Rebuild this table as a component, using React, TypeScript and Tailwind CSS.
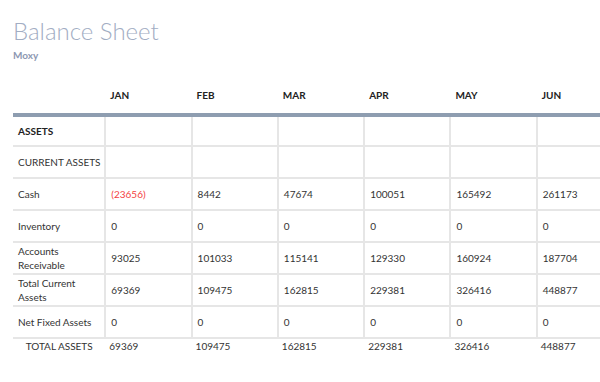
import React from 'react';

type Row = {
  label: string;
  values?: (number | string)[];
  bold?: boolean;
};

const months = ['JAN', 'FEB', 'MAR', 'APR', 'MAY', 'JUN'];

const rows: Row[] = [
  { label: 'ASSETS', bold: true },
  { label: 'CURRENT ASSETS' },
  { label: 'Cash', values: [-23656, 8442, 47674, 100051, 165492, 261173] },
  { label: 'Inventory', values: [0, 0, 0, 0, 0, 0] },
  { label: 'Accounts Receivable', values: [93025, 101033, 115141, 129330, 160924, 187704] },
  { label: 'Total Current Assets', values: [69369, 109475, 162815, 229381, 326416, 448877] },
  { label: 'Net Fixed Assets', values: [0, 0, 0, 0, 0, 0] },
];

const totals = [69369, 109475, 162815, 229381, 326416, 448877];

const fmt = (n: number | string) => {
  if (typeof n === 'number' && n < 0) {
    return <span className="text-[#f43f3f]">({Math.abs(n)})</span>;
  }
  return n;
};

export default function App() {
  return (
    <div
      className="w-[600px] h-[382px] overflow-hidden bg-white pl-[13px] pt-[16px]"
      style={{ fontFamily: 'Lato, "Open Sans", sans-serif' }}
    >
      <h1 className="text-[24px] font-light leading-[30px] text-[#a2adc3]">Balance Sheet</h1>
      <div className="text-[10px] font-bold leading-[12px] mt-[3px] text-[#8d98b2]">Moxy</div>

      <table className="mt-[20px] border-collapse table-fixed w-[610px] text-[10px] text-[#333]">
        <colgroup>
          <col className="w-[92px]" />
          {months.map((m) => (
            <col key={m} className="w-[86px]" />
          ))}
        </colgroup>
        <thead>
          <tr className="border-b-[4px] border-[#8e9db0]">
            <th className="h-[34px] pb-[3px]" />
            {months.map((m) => (
              <th key={m} className="text-left font-bold pl-[5px] pb-[3px] text-[#222]">
                {m}
              </th>
            ))}
          </tr>
        </thead>
        <tbody>
          {rows.map((r, idx) => (
            <tr key={r.label} className="border-b-2 border-[#e6e6e6]">
              <td
                className={`${idx === 0 ? 'h-[31px]' : 'h-[32px]'} pl-[5px] pr-[2px] leading-[14px] ${r.bold ? 'font-bold text-[#222]' : ''}`}
              >
                {r.label}
              </td>
              {months.map((m, i) => (
                <td key={m} className="border-l-2 border-[#e6e6e6] pl-[5px]">
                  {r.values ? fmt(r.values[i]) : ''}
                </td>
              ))}
            </tr>
          ))}
          <tr>
            <th className="h-[16px] font-normal text-center pb-[2px]">TOTAL ASSETS</th>
            {totals.map((v, i) => (
              <td key={i} className="pl-[4px] pb-[2px]">
                {v}
              </td>
            ))}
          </tr>
        </tbody>
      </table>
    </div>
  );
}
